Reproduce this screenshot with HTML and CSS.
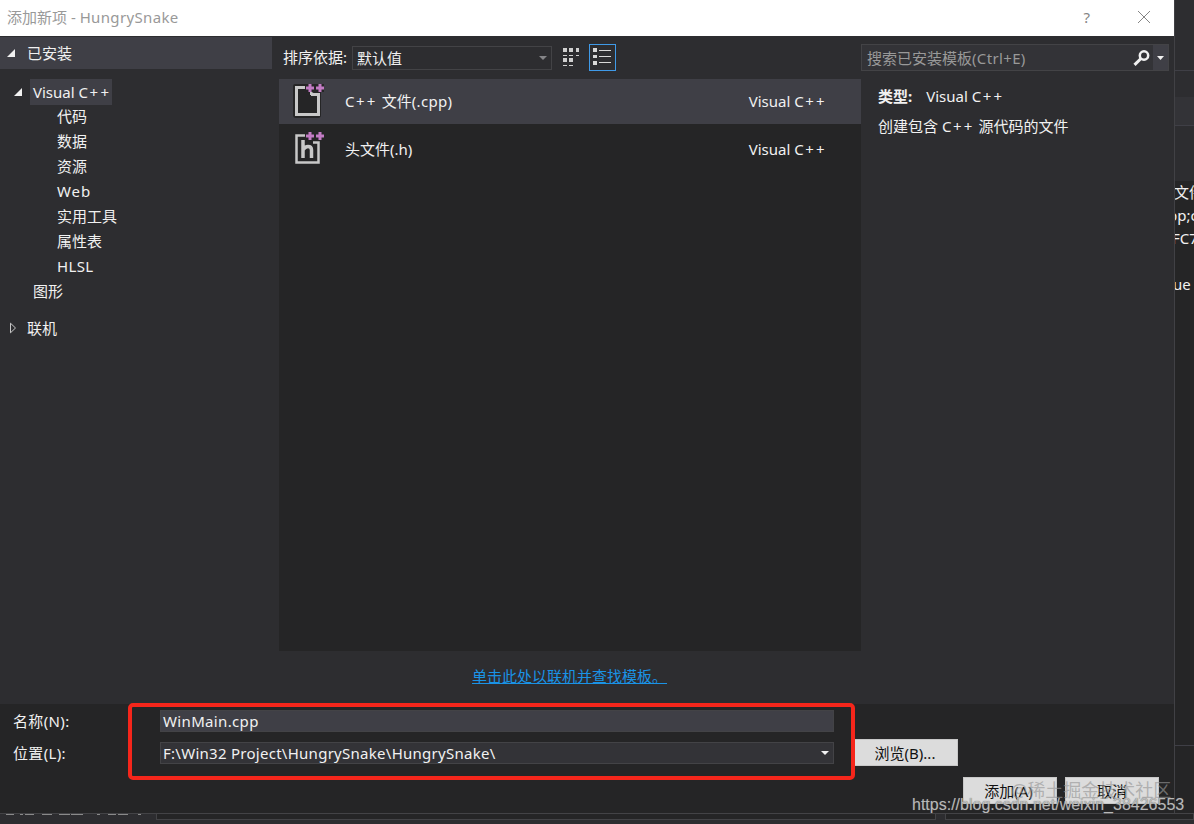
FILE: index.html
```html
<!DOCTYPE html>
<html lang="zh-CN">
<head>
  <meta charset="UTF-8">
  <title>添加新项 - HungrySnake</title>
  <link rel="stylesheet" href="styles.css">
</head>
<body>
  <div class="screen">
    <div class="dialog">
      <div class="titlebar">
        <span class="title">添加新项 - <span class="wide">HungrySnake</span></span>
        <span class="help">?</span>
        <svg class="close" width="14" height="14" viewBox="0 0 14 14"><path d="M1 1L13 13M13 1L1 13" stroke="#858585" fill="none"/></svg>
      </div>

      <div class="main">
        <div class="sidebar">
          <div class="group open">
            <svg width="8" height="8"><path d="M8 0V8H0z" fill="#f1f1f1"/></svg>
            <span>已安装</span>
          </div>
          <ul class="tree">
            <li class="root">
              <svg width="8" height="8"><path d="M8 0V8H0z" fill="#f1f1f1"/></svg>
              <span class="selected">Visual C<span class="plus">++</span></span>
            </li>
            <li>代码</li>
            <li>数据</li>
            <li>资源</li>
            <li class="web">Web</li>
            <li>实用工具</li>
            <li>属性表</li>
            <li class="wide">HLSL</li>
            <li class="top">图形</li>
          </ul>
          <div class="group online">
            <svg width="8" height="12"><path d="M1.5 1.2L6.5 6L1.5 10.8z" fill="none" stroke="#c8c8c8"/></svg>
            <span>联机</span>
          </div>
        </div>

        <div class="center">
          <div class="toolbar">
            <label>排序依据:</label>
            <div class="sort">默认值
              <svg width="8" height="4"><path d="M0 0H8L4 4z" fill="#858588"/></svg>
            </div>
            <svg class="view" width="27" height="27" viewBox="0 0 27 27" fill="#d0d0d0">
              <path d="M6 4h4v4H6zM12 4h4v4h-4zM19 4h3v4h-3zM6 14h4v4H6zM12 14h4v4h-4zM6 11h4v1H6zM12 11h4v1h-4zM19 11h3v1h-3zM6 21h4v1H6zM12 21h4v1h-4z"/>
            </svg>
            <svg class="view active" width="27" height="27" viewBox="0 0 27 27" fill="#d8d8d8">
              <path d="M4 4h4v4H4zM4 11h4v3H4zM4 17h4v4H4zM10 6h12v1H10zM10 12h12v1H10zM10 18h12v1H10z"/>
            </svg>
          </div>
          <div class="list">
            <div class="item selected">
              <svg class="icon" width="36" height="40" viewBox="0 0 36 40">
                <path d="M5 3H34V11H31V34Q31 37 28 37H6Q3 37 3 34V5Q3 3 5 3z" fill="#252526"/>
                <path d="M15 6.500H6.500V33.500H28.500V13.500H21" fill="none" stroke="#c8c8c8" stroke-width="3"/>
                <path d="M20 10L27 14H20z" fill="#c8c8c8"/>
                <path d="M20 3V11M16 7H24M30 3V11M26 7H34" stroke="#c27bc4" stroke-width="3"/>
              </svg>
              <span class="name">C<span class="plus">++</span> 文件<span class="wide">(.cpp)</span></span>
              <span class="lang">Visual C<span class="plus">++</span></span>
            </div>
            <div class="item">
              <svg class="icon" width="36" height="40" viewBox="0 0 36 40">
                <path d="M15 6.500H6.500V33.500H28.500V13.500H23" fill="none" stroke="#c8c8c8" stroke-width="2.500"/>
                <path d="M13 11V29M13 21Q15 17.500 18 17.500Q21.500 17.500 21.500 21V29" fill="none" stroke="#c8c8c8" stroke-width="3.500"/>
                <path d="M20 3V11M16 7H24M30 3V11M26 7H34" stroke="#c27bc4" stroke-width="3"/>
              </svg>
              <span class="name">头文件(.h)</span>
              <span class="lang">Visual C<span class="plus">++</span></span>
            </div>
          </div>
          <a class="more">单击此处以联机并查找模板。</a>
        </div>

        <div class="details">
          <div class="search">
            <span>搜索已安装模板<span class="wide">(Ctrl+E)</span></span>
            <svg width="17" height="16" viewBox="0 0 17 16" fill="none" stroke="#f1f1f1"><circle cx="11" cy="5.500" r="4.200" stroke-width="2.500"/><path d="M8 8.500L1.500 14.800" stroke-width="3"/></svg>
            <div class="drop"><svg width="7" height="4"><path d="M0 0H7L3.500 4z" fill="#f1f1f1"/></svg></div>
          </div>
          <p class="type"><b>类型:</b><span>Visual C<span class="plus">++</span></span></p>
          <p class="desc">创建包含 C<span class="plus">++</span> 源代码的文件</p>
        </div>
      </div>

      <div class="footer">
        <div class="row name-row">
          <label class="wide">名称(N):</label>
          <div class="field filled"><span class="wide">WinMain.cpp</span></div>
        </div>
        <div class="row path-row">
          <label class="wide">位置(L):</label>
          <div class="field"><span class="path">F:\Win32 Project\HungrySnake\HungrySnake\</span>
            <svg width="8" height="4"><path d="M0 0H8L4 4z" fill="#f1f1f1"/></svg>
          </div>
          <button class="browse">浏览(B)...</button>
        </div>
        <div class="actions">
          <button class="add">添加(A)</button>
          <button>取消</button>
        </div>
      </div>
    </div>

    <div class="behind">
      <div class="tabs"></div>
      <div class="grip"></div>
      <div class="band"></div>
      <div class="code">
        <span>文件</span>
        <span class="cut">pp;c</span>
        <span class="cut-f">FC7</span>
        <span></span>
        <span class="cut-u">ue</span>
      </div>
      <div class="rest"></div>
    </div>

    <div class="status">
      <!-- lower edge of the line hidden under the dialog -->
      <svg class="status-text" width="147" height="3"><path d="M6 .5h8M20 .5h3M25 .5h9M42 .5h10M59 .5h11M71 .5h12M97 .5h3M108 .5h8M118 .5h10M138 .5h3" stroke="#8a8a8a"/></svg>
      <div class="status-box"></div>
      <div class="status-box last"></div>
    </div>
  </div>

  <div class="highlight"></div>
  <div class="mark community">@稀土掘金技术社区</div>
  <div class="mark url">https://blog.csdn.net/weixin_38426553</div>
</body>
</html>
```
FILE: styles.css
```css
* { box-sizing: border-box; }
body { margin: 0; width: 1194px; height: 824px; overflow: hidden; background: #252526; color: #f1f1f1; font: 15px/20px "Noto Sans", "Noto Sans CJK SC", sans-serif; }
svg { display: block; flex: none; }
.wide { letter-spacing: .35px; }
.path { letter-spacing: .27px; }
.plus { letter-spacing: 2.3px; margin-left: 1.5px; }
.screen { display: grid; grid-template-columns: 1175px 19px; grid-template-rows: 813px 11px; }

.dialog { height: 813px; background: #2d2d30; border-right: 1px solid #414145; }
.titlebar { display: flex; align-items: center; height: 36px; padding: 0 23px 2px 7px; background: #fff; color: #999; }
.title { flex: 1; }
.help { margin-right: 47px; color: #858585; }

.main { display: flex; height: 668px; }
.sidebar { width: 272px; padding-top: 1px; }
.group { display: flex; align-items: center; height: 32px; padding-left: 7px; gap: 12px; }
.open { background: #3f3f46; }
.online { margin-top: 8px; padding-left: 9px; gap: 10px; }
.tree { list-style: none; margin: 0; padding: 10px 0 0; }
.tree li { height: 25px; padding-left: 57px; line-height: 25px; }
.tree .web { letter-spacing: .9px; }
.tree .top { padding-left: 33px; }
.tree .root { display: flex; align-items: center; padding-left: 14px; gap: 8px; }
.tree .selected { padding: 0 1px 0 3px; background: #3f3f46; line-height: 26px; }

.center { width: 589px; padding-left: 7px; }
.toolbar { display: flex; align-items: center; height: 43px; padding-left: 4px; }
.toolbar label { width: 69px; padding-bottom: 2px; white-space: nowrap; }
.sort { display: flex; align-items: center; justify-content: space-between; width: 200px; height: 24px; padding: 0 4px; border: 1px solid #434346; background: #2d2d30; }
.view { margin-left: 5px; }
.active { margin-left: 5px; outline: 1px solid #3f9ae8; outline-offset: -1px; }
.list { height: 572px; background: #252526; }
.item { display: flex; align-items: center; height: 45px; margin-bottom: 3px; padding: 0 34px 2px 11px; }
.item.selected { background: #3f3f46; }
.icon { margin-right: 19px; }
.name { flex: 1; }
.more { display: block; width: max-content; margin: 15px 0 0 193px; color: #1a93e6; text-decoration: underline; }

.details { width: 313px; padding: 8px 5px 0 0; }
.search { display: flex; align-items: center; height: 27px; padding-left: 5px; border: 1px solid #434346; background: #333337; color: #999; }
.search > span { flex: 1; }
.drop { display: flex; align-items: center; justify-content: center; width: 15px; height: 25px; margin-left: 3px; background: #3f3f46; }
.details p { margin: 0 0 0 17px; }
.details .type { display: flex; gap: 14px; margin-top: 15px; }
.details .desc { margin-top: 10px; }

.footer { height: 109px; padding-top: 6px; background: #252526; }
.row { display: flex; align-items: center; padding-left: 13px; }
.name-row { height: 22px; }
.path-row { height: 28px; margin-top: 7px; }
.row label { width: 147px; }
.field { display: flex; align-items: center; justify-content: space-between; width: 674px; height: 22px; padding: 0 4px 0 2px; border: 1px solid #434346; background: #333337; }
.filled { background: #3f3f46; }
button { width: 94px; height: 27px; padding: 1px 0 0; border: 1px solid #c8c8c8; background: #dcdcdc; color: #111; font: inherit; }
.browse { width: 104px; margin: -2px 0 0 20px; padding-right: 2px; }
.add { padding-right: 3px; }
.actions { display: flex; justify-content: flex-end; gap: 8px; padding: 10px 15px 0 0; }

.behind { height: 813px; overflow: hidden; background: #252526; }
.tabs { height: 71px; background: #2d2d30; border-bottom: 1px solid #3f3f46; }
.grip { height: 26px; background: #2d2d30; }
.band { height: 29px; background: #333337; border-bottom: 1px solid #3f3f46; }
.code { height: 204px; padding-top: 55px; background: linear-gradient(#2d2d30 55px, #252526 55px); }
.code span { display: block; height: 23px; line-height: 23px; white-space: nowrap; margin-left: -1px; }
.code .cut { margin-left: -7px; }
.code .cut-f { margin-left: -3px; }
.code .cut-u { margin-left: -2px; }
.rest { height: 416px; background: #252526; border-bottom: 1px solid #3f3f46; }

.status { grid-column: 1 / 3; display: flex; gap: 9px; background: #2d2d30; border-top: 1px solid #434346; }
.status-text { width: 147px; }
.status-box { width: 780px; height: 6px; border: 1px solid #434346; border-top: 0; background: #252526; }
.last { flex: 1; }

/* overlays */
.highlight { position: absolute; left: 128px; top: 703px; width: 727px; height: 77px; border: 4px solid #f5261b; border-radius: 5px; }
.mark { position: absolute; white-space: nowrap; }
.community { left: 1011px; top: 780px; color: rgba(150, 150, 150, .65); font-size: 18px; }
.url { left: 912px; top: 795px; color: rgba(205, 205, 205, .85); font: 16px/20px "Liberation Sans", Arial, sans-serif; text-shadow: 0 0 1px #555; }
```
